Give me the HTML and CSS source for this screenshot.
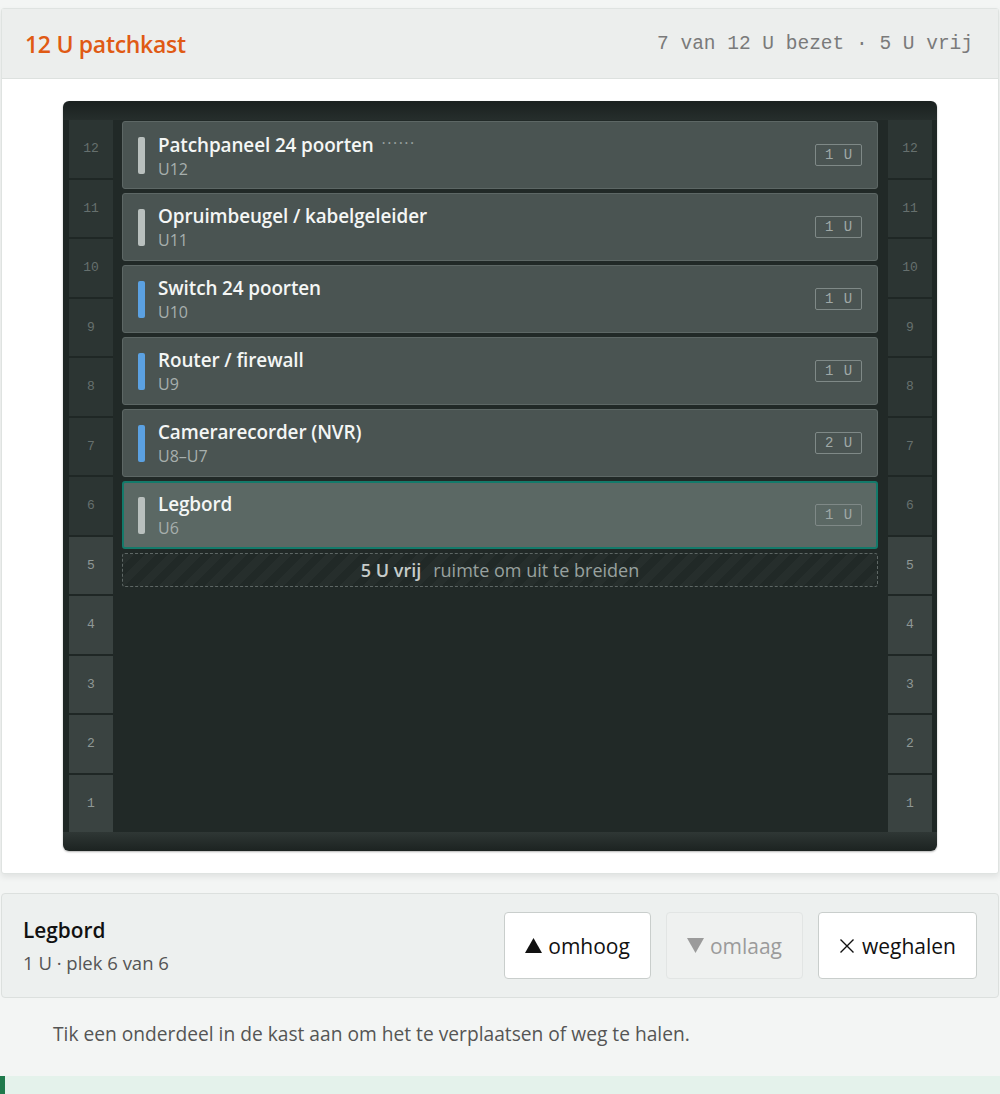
FILE: index.html
```html
<!DOCTYPE html>
<html lang="nl">
<head>
<meta charset="utf-8">
<title>12 U patchkast</title>
<link rel="stylesheet" href="styles.css">
</head>
<body>
<div class="page">
  <section class="card">
    <header class="card-head">
      <h1 class="title">12 U patchkast</h1>
      <span class="stats">7 van 12 U bezet · 5 U vrij</span>
    </header>
    <div class="card-body">
      <div class="rack">
        <div class="rack-inner">
          <div class="rail">
            <div class="u used">12</div><div class="u used">11</div><div class="u used">10</div><div class="u used">9</div><div class="u used">8</div><div class="u used">7</div><div class="u used">6</div><div class="u free">5</div><div class="u free">4</div><div class="u free">3</div><div class="u free">2</div><div class="u free">1</div>
          </div>
          <div class="slots">
            <div class="device">
              <span class="bar grey"></span>
              <div class="dev-text"><div class="dev-name">Patchpaneel 24 poorten <span class="ports">······</span></div><div class="dev-pos">U12</div></div>
              <span class="badge">1 U</span>
            </div>
            <div class="device">
              <span class="bar grey"></span>
              <div class="dev-text"><div class="dev-name">Opruimbeugel / kabelgeleider</div><div class="dev-pos">U11</div></div>
              <span class="badge">1 U</span>
            </div>
            <div class="device">
              <span class="bar blue"></span>
              <div class="dev-text"><div class="dev-name">Switch 24 poorten</div><div class="dev-pos">U10</div></div>
              <span class="badge">1 U</span>
            </div>
            <div class="device">
              <span class="bar blue"></span>
              <div class="dev-text"><div class="dev-name">Router / firewall</div><div class="dev-pos">U9</div></div>
              <span class="badge">1 U</span>
            </div>
            <div class="device">
              <span class="bar blue"></span>
              <div class="dev-text"><div class="dev-name">Camerarecorder (NVR)</div><div class="dev-pos">U8–U7</div></div>
              <span class="badge">2 U</span>
            </div>
            <div class="device selected">
              <span class="bar grey"></span>
              <div class="dev-text"><div class="dev-name">Legbord</div><div class="dev-pos">U6</div></div>
              <span class="badge">1 U</span>
            </div>
            <div class="free-space"><strong>5 U vrij</strong><span>ruimte om uit te breiden</span></div>
          </div>
          <div class="rail">
            <div class="u used">12</div><div class="u used">11</div><div class="u used">10</div><div class="u used">9</div><div class="u used">8</div><div class="u used">7</div><div class="u used">6</div><div class="u free">5</div><div class="u free">4</div><div class="u free">3</div><div class="u free">2</div><div class="u free">1</div>
          </div>
        </div>
      </div>
    </div>
  </section>

  <section class="selection">
    <div class="sel-info">
      <div class="sel-name">Legbord</div>
      <div class="sel-meta">1 U · plek 6 van 6</div>
    </div>
    <div class="sel-actions">
      <button class="btn"><svg class="tri" viewBox="0 0 17 15" width="17" height="15" aria-hidden="true"><path d="M8.5 0 L17 15 L0 15 Z" fill="currentColor"/></svg>omhoog</button>
      <button class="btn" disabled><svg class="tri" viewBox="0 0 17 15" width="17" height="15" aria-hidden="true"><path d="M0 0 L17 0 L8.5 15 Z" fill="currentColor"/></svg>omlaag</button>
      <button class="btn"><svg class="x-icon" viewBox="0 0 16 16" width="16" height="16" aria-hidden="true"><path d="M1.5 1.5 L14.5 14.5 M14.5 1.5 L1.5 14.5" stroke="currentColor" stroke-width="1.4" fill="none"/></svg>weghalen</button>
    </div>
  </section>

  <p class="hint">Tik een onderdeel in de kast aan om het te verplaatsen of weg te halen.</p>

  <div class="notice"></div>
</div>
</body>
</html>
```
FILE: styles.css
```css
* { box-sizing: border-box; }
html, body { margin: 0; padding: 0; }
body {
  background: #f3f5f4;
  font-family: "Open Sans", "Noto Sans", sans-serif;
  color: #222;
  overflow: hidden;
}
.page { padding-top: 8px; }

.card {
  margin: 0 1px;
  background: #fff;
  border: 1px solid #dfe3e1;
  border-radius: 3px;
  box-shadow: 0 3px 6px rgba(0,0,0,0.08);
}
.card-head {
  height: 70px;
  display: flex;
  align-items: center;
  justify-content: space-between;
  padding: 0 25px 0 23px;
  background: #eceeed;
  border-bottom: 1px solid #dde1df;
}
.title {
  margin: 0;
  font-size: 23px;
  font-weight: 600;
  color: #e05a14;
  letter-spacing: -0.3px;
}
.stats {
  font-family: "Liberation Mono", monospace;
  font-size: 19.5px;
  color: #7a7a7a;
}
.card-body {
  padding: 22px 61px 22px 61px;
}

.rack {
  background: linear-gradient(to bottom, #1a201f 0, #262e2c 19px, #1f2725 19px, #1f2725 731px, #2f3735 731px, #1c2321 750px);
  border-radius: 6px;
  padding: 19px 5px 19px 6px;
  box-shadow: 0 1px 2px rgba(0,0,0,0.3);
}
.rack-inner {
  display: grid;
  grid-template-columns: 44px 1fr 44px;
  height: 712px;
}
.rail {
  display: grid;
  grid-template-rows: repeat(12, 1fr);
  row-gap: 2px;
  background: #1f2725;
}
.u {
  display: flex;
  align-items: center;
  justify-content: center;
  font-family: "Liberation Mono", monospace;
  font-size: 13px;
}
.u.used { background: #2c3533; color: #66706e; }
.u.free { background: #3a4341; color: #8f9896; }

.slots {
  background: #212927;
  padding: 1px 10px 0 9px;
  display: flex;
  flex-direction: column;
  gap: 4px;
}
.device {
  height: 68px;
  flex: none;
  display: flex;
  align-items: center;
  background: #4a5452;
  border: 1px solid #5d6765;
  border-radius: 3px;
  padding: 0 15px 0 15px;
}
.device.selected {
  background: #5b6864;
  border: 2px solid #137a6a;
  padding: 0 14px 0 14px;
}
.bar {
  width: 7px;
  height: 37px;
  border-radius: 2px;
  flex: none;
  margin-right: 13px;
}
.bar.grey { background: #b9c0be; }
.bar.blue { background: #5ba1e2; }
.dev-text { flex: 1; min-width: 0; }
.dev-name {
  font-size: 18.9px;
  font-weight: 600;
  color: #f4f6f5;
  line-height: 26px;
  letter-spacing: -0.1px;
}
.ports {
  font-weight: 400;
  color: #98a19f;
  font-size: 16px;
  letter-spacing: 1.5px;
  vertical-align: 3px;
  margin-left: 3px;
}
.dev-pos {
  font-size: 16px;
  color: #a7afad;
  line-height: 22px;
}
.badge {
  flex: none;
  width: 47px;
  height: 22px;
  border: 1px solid #7f8987;
  border-radius: 2px;
  display: flex;
  align-items: center;
  justify-content: center;
  font-family: "Liberation Mono", monospace;
  font-size: 14px;
  color: #a0a9a7;
  white-space: pre;
  word-spacing: 2px;
}

.free-space {
  height: 34px;
  flex: none;
  border: 1px dashed #5e6765;
  border-radius: 3px;
  display: flex;
  align-items: center;
  justify-content: center;
  gap: 12px;
  font-size: 18px;
  color: #98a19f;
  background: repeating-linear-gradient(135deg, rgba(255,255,255,0.022) 0 8px, rgba(255,255,255,0) 8px 16px);
}
.free-space strong { color: #c6ccca; font-weight: 600; }

.selection {
  margin: 19px 1px 0 1px;
  background: #edf0ef;
  border: 1px solid #dce0de;
  border-radius: 4px;
  height: 105px;
  display: flex;
  align-items: center;
  justify-content: space-between;
  padding: 0 21px 0 21px;
}
.sel-name {
  font-size: 20.8px;
  font-weight: 600;
  color: #111;
  line-height: 28px;
}
.sel-meta {
  margin-top: 6px;
  font-size: 18.5px;
  color: #555;
  line-height: 26px;
}
.sel-actions {
  display: flex;
  gap: 15px;
}
.btn {
  font-family: "Open Sans", "Noto Sans", sans-serif;
  font-size: 21px;
  height: 67px;
  padding: 0 20px;
  background: #fff;
  color: #111;
  border: 1px solid #c9cecc;
  border-radius: 4px;
  display: inline-flex;
  align-items: center;
}
.tri {
  margin-right: 6px;
  flex: none;
}
.x-icon {
  margin-right: 7px;
  flex: none;
}
.btn:disabled {
  background: #eff1f0;
  color: #9b9b9b;
  border-color: #e2e5e4;
}

.hint {
  margin: 0;
  padding: 22px 52px 0 53px;
  font-size: 19.2px;
  color: #555;
  line-height: 28px;
}
.notice {
  margin-top: 28px;
  height: 40px;
  background: #e4f2eb;
  border-left: 5px solid #1f7a4c;
}
```
